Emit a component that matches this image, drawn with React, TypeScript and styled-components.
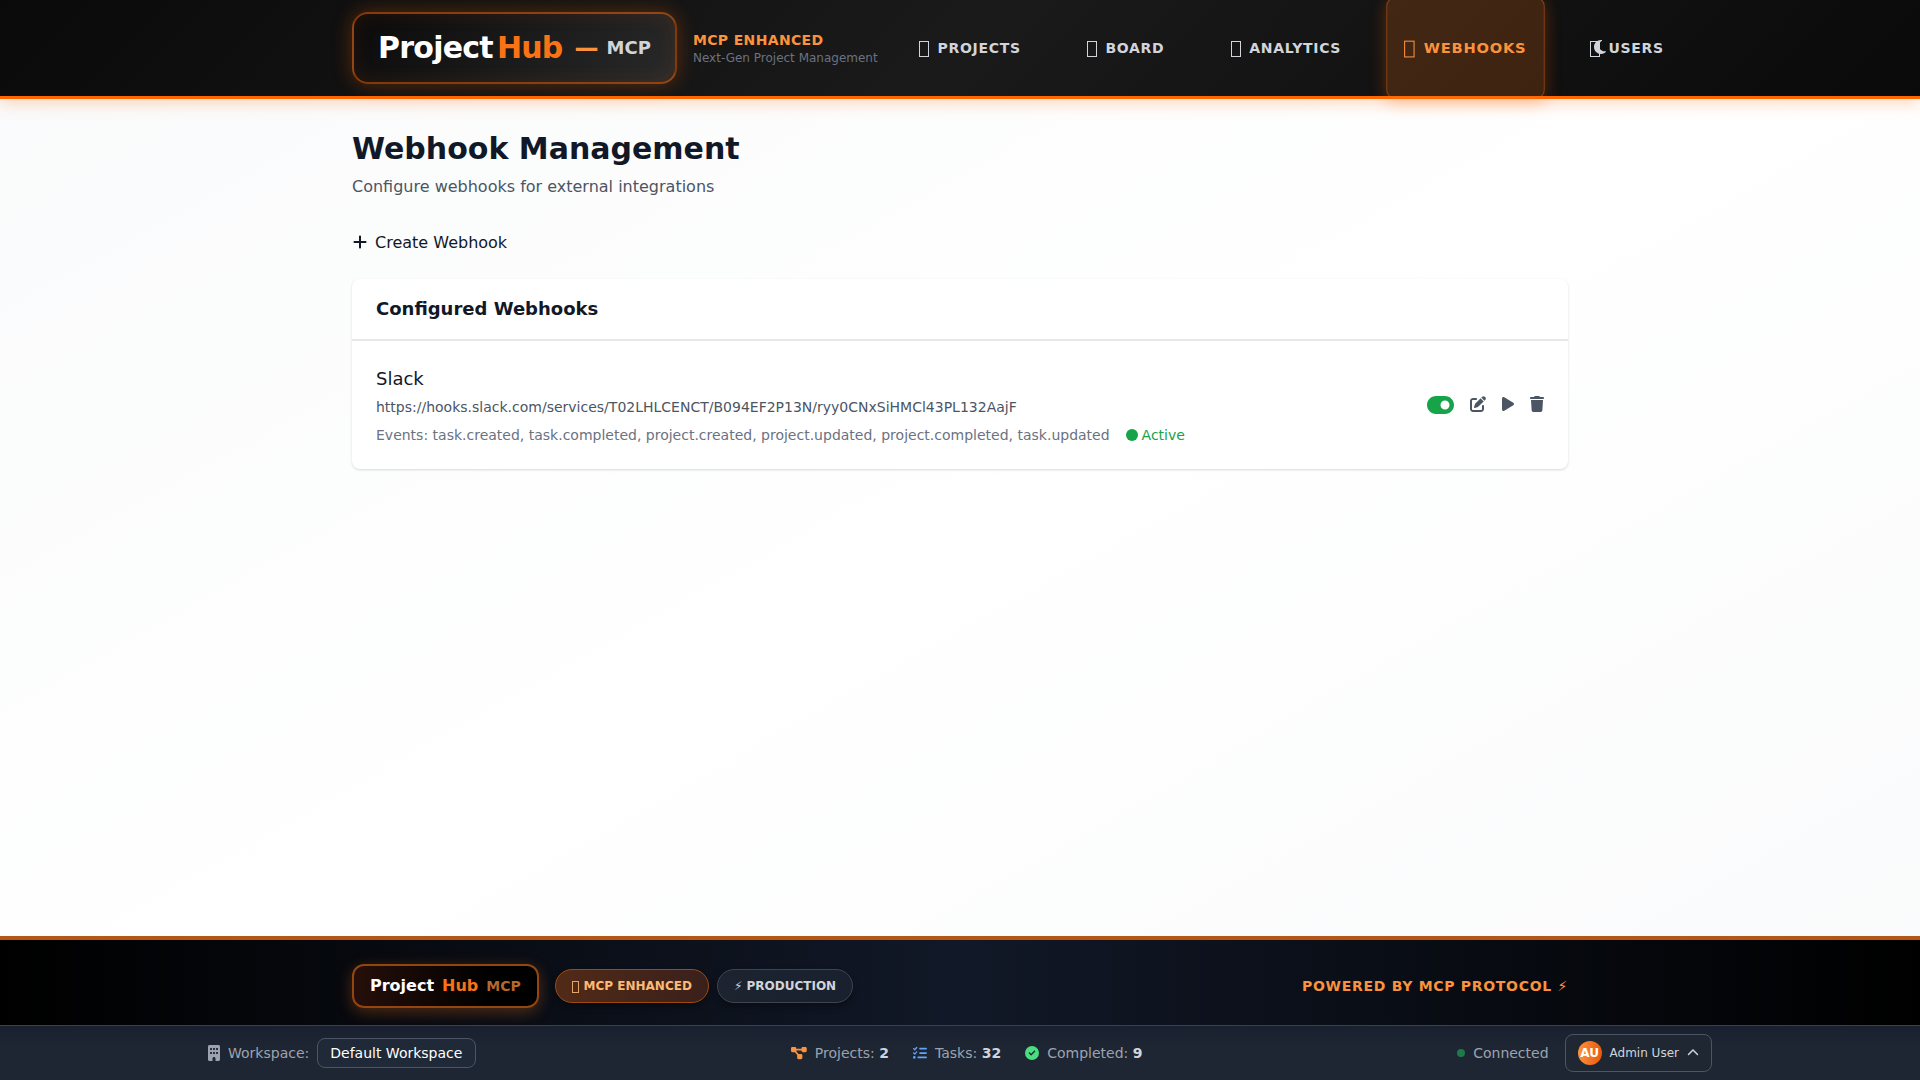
import React from "react";
import styled, { createGlobalStyle, css } from "styled-components";
import {
  FaBuilding,
  FaChevronUp,
  FaCircle,
  FaCircleCheck,
  FaDiagramProject,
  FaListCheck,
  FaMoon,
  FaPenToSquare,
  FaPlay,
  FaPlus,
  FaToggleOn,
  FaTrash,
} from "react-icons/fa6";

const GlobalStyle = createGlobalStyle`
  *, *::before, *::after { box-sizing: border-box; }
  body {
    margin: 0;
    font-family: "DejaVu Sans", sans-serif;
    font-size: 16px;
    line-height: 24px;
    color: #111827;
  }
  h1, h2, h3, p { margin: 0; }
  button { font: inherit; color: inherit; background: none; border: 0; padding: 0; }
  svg { display: block; flex-shrink: 0; height: 1em; }
  svg[viewBox="0 0 576 512"] { width: 1.125em; }
  svg[viewBox="0 0 448 512"] { width: 0.875em; }
  svg[viewBox="0 0 384 512"] { width: 0.75em; }
`;

const Page = styled.div`
  height: 100vh;
  display: flex;
  flex-direction: column;
  overflow: hidden;
  background: linear-gradient(to bottom right, #f9fafb 0%, #ffffff 50%, #f9fafb 100%);
`;

const Header = styled.header`
  position: relative;
  flex-shrink: 0;
  height: 99px;
  border-bottom: 3px solid #ff6600;
  background: linear-gradient(135deg, #0a0a0a 0%, #1a1a1a 50%, #0a0a0a 100%);
  box-shadow: 0 4px 15px rgba(255, 102, 0, 0.27);
`;

const Container = styled.div`
  width: 1216px;
  margin: 0 auto;
`;

const HeaderRow = styled(Container)`
  height: 96px;
  display: flex;
  align-items: center;
`;

const Logo = styled.div`
  display: flex;
  align-items: center;
  flex-shrink: 0;
  height: 72px;
  padding: 0 24px;
  border: 2px solid rgba(255, 102, 0, 0.5);
  border-radius: 16px;
  background: linear-gradient(135deg, #0a0a0a, #2a2a2a);
  box-shadow: 0 0 20px rgba(255, 102, 0, 0.3), inset 0 0 20px rgba(255, 102, 0, 0.1);
  font-weight: 700;
  white-space: nowrap;
`;

const LogoWord = styled.span<{ $accent?: boolean }>`
  font-size: 30px;
  line-height: 36px;
  letter-spacing: -0.75px;
  color: ${(p) => (p.$accent ? "#f97316" : "#ffffff")};
  margin-left: ${(p) => (p.$accent ? "4px" : "0")};
`;

const LogoDash = styled.span`
  margin: 0 8px 0 12px;
  font-size: 24px;
  line-height: 32px;
  color: #fb923c;
`;

const LogoSuffix = styled.span`
  font-size: 18px;
  line-height: 28px;
  color: #d1d5db;
`;

const Tagline = styled.div`
  display: flex;
  flex-direction: column;
  flex-shrink: 0;
  margin-left: 16px;
  white-space: nowrap;
`;

const TaglineTitle = styled.span`
  font-size: 14px;
  line-height: 20px;
  font-weight: 700;
  letter-spacing: 0.35px;
  color: #fb923c;
`;

const TaglineText = styled.span`
  font-size: 12px;
  line-height: 16px;
  color: #6b7280;
`;

const Nav = styled.nav`
  display: flex;
  gap: 32px;
  margin-left: 24px;
`;

const NavItem = styled.a<{ $active?: boolean }>`
  display: flex;
  align-items: center;
  flex-shrink: 0;
  height: 96px;
  padding: 0 16px;
  border: 1px solid transparent;
  border-radius: 8px;
  font-size: 14px;
  font-weight: 700;
  letter-spacing: 0.7px;
  white-space: nowrap;
  color: #d1d5db;
  ${(p) =>
    p.$active &&
    css`
      color: #fb923c;
      border-color: rgba(249, 115, 22, 0.4);
      background: rgba(249, 115, 22, 0.2);
      box-shadow: 0 4px 15px rgba(255, 102, 0, 0.3);
      transform: scale(1.05);
    `}
`;

const NavGlyph = styled.span`
  width: 10px;
  height: 16px;
  margin: 2px 8.6px 0 0.2px;
  border: 1px solid currentColor;
`;

const ThemeToggle = styled.button`
  position: absolute;
  left: 1594px;
  top: 39px;
  font-size: 16px;
  color: #d1d5db;
`;

const Main = styled.main`
  flex: 1;
  padding-top: 32px;
`;

const Title = styled.h1`
  font-size: 30px;
  line-height: 36px;
  font-weight: 700;
`;

const Subtitle = styled.p`
  margin-top: 8px;
  color: #4b5563;
`;

const CreateButton = styled.button`
  display: flex;
  align-items: center;
  gap: 8.5px;
  margin: 32px 0 24px;
  padding-left: 0.5px;
  svg { margin-bottom: 3px; }
`;

const Card = styled.section`
  border-radius: 8px;
  background: #ffffff;
  box-shadow: 0 1px 3px rgba(0, 0, 0, 0.1), 0 1px 2px rgba(0, 0, 0, 0.06);
`;

const CardHeader = styled.h2`
  padding: 16px 24px;
  border-bottom: 2px solid #e5e7eb;
  font-size: 18px;
  line-height: 28px;
  font-weight: 700;
`;

const WebhookRow = styled.div`
  display: flex;
  align-items: center;
  justify-content: space-between;
  padding: 24px;
`;

const WebhookName = styled.h3`
  font-size: 18px;
  line-height: 28px;
  font-weight: 400;
`;

const WebhookUrl = styled.p`
  margin-top: 4px;
  font-size: 14px;
  line-height: 20px;
  color: #4b5563;
`;

const WebhookMeta = styled.div`
  display: flex;
  align-items: center;
  gap: 16px;
  margin-top: 8px;
  font-size: 14px;
  line-height: 20px;
  color: #6b7280;
`;

const ActiveState = styled.span`
  display: flex;
  align-items: center;
  gap: 4px;
  color: #16a34a;
  svg { font-size: 12px; }
`;

const Actions = styled.div`
  display: flex;
  align-items: center;
  gap: 16px;
  color: #4b5563;
`;

const ActionButton = styled.button<{ $toggle?: boolean }>`
  font-size: ${(p) => (p.$toggle ? "24px" : "16px")};
  color: ${(p) => (p.$toggle ? "#16a34a" : "inherit")};
  padding-bottom: ${(p) => (p.$toggle ? "0" : "2px")};
`;

const Footer = styled.footer`
  flex-shrink: 0;
  height: 89px;
  border-top: 4px solid #b45614;
  background: linear-gradient(90deg, #000000, #111827, #000000);
`;

const FooterRow = styled(Container)`
  display: flex;
  align-items: center;
  padding-top: 24px;
`;

const FooterLogo = styled.div`
  display: flex;
  align-items: center;
  gap: 8px;
  height: 44px;
  margin-right: 16px;
  padding: 0 16px;
  border: 2px solid #94460f;
  border-radius: 12px;
  background: linear-gradient(90deg, #260f0a, #000000 75%);
  box-shadow: 0 4px 15px rgba(249, 115, 22, 0.3);
  font-weight: 700;
`;

const FooterWord = styled.span<{ $tone: "plain" | "accent" | "muted" }>`
  font-size: ${(p) => (p.$tone === "muted" ? "14px" : "16px")};
  color: ${(p) => ({ plain: "#ffffff", accent: "#f97316", muted: "#b4682c" })[p.$tone]};
`;

const Pill = styled.span<{ $accent?: boolean }>`
  display: flex;
  align-items: center;
  margin-right: 8px;
  padding: 8px 16px;
  border: 1px solid ${(p) => (p.$accent ? "#9c4a14" : "#3e4550")};
  border-radius: 999px;
  background: ${(p) =>
    p.$accent
      ? "linear-gradient(90deg, #522a17, #3a201b)"
      : "linear-gradient(90deg, #1d2430, #19202e)"};
  box-shadow: 0 4px 6px rgba(0, 0, 0, 0.3);
  font-size: 12px;
  line-height: 16px;
  font-weight: 700;
  color: ${(p) => (p.$accent ? "#fdba74" : "#d1d5db")};
`;

const PillGlyph = styled.span`
  width: 7px;
  height: 12px;
  margin: 1px 4.8px 0 0;
  border: 1px solid currentColor;
  opacity: 0.85;
`;

const Powered = styled.span`
  margin-left: auto;
  font-size: 14px;
  line-height: 20px;
  font-weight: 700;
  letter-spacing: 0.7px;
  color: #fb923c;
`;

const StatusBar = styled.div`
  flex-shrink: 0;
  height: 55px;
  border-top: 1px solid #374151;
  background: linear-gradient(180deg, #192130, #1f2633 50%);
  font-size: 14px;
  line-height: 20px;
  color: #9ca3af;
`;

const StatusInner = styled.div`
  width: 1504px;
  height: 54px;
  margin: 0 auto;
  display: flex;
  align-items: center;
  justify-content: space-between;
`;

const Group = styled.div<{ $gap?: number }>`
  display: flex;
  align-items: center;
  gap: ${(p) => p.$gap ?? 8}px;
`;

const WorkspaceSelect = styled.button`
  height: 30px;
  padding: 0 13px 0 12px;
  border: 1px solid #4b5563;
  border-radius: 8px;
  background: #1f2937;
  color: #ffffff;
`;

const StatIcon = styled.span<{ $color: string; $size?: number }>`
  font-size: ${(p) => p.$size ?? 14}px;
  color: ${(p) => p.$color};
`;

const StatValue = styled.strong`
  font-weight: 700;
  color: #d1d5db;
`;

const Dot = styled.span`
  width: 8px;
  height: 8px;
  border-radius: 50%;
  background: #1f7a4a;
`;

const UserButton = styled.button`
  display: flex;
  align-items: center;
  gap: 8px;
  height: 38px;
  padding: 0 12px;
  border: 1px solid #4b5563;
  border-radius: 8px;
  background: #1f2733;
  font-size: 12px;
  line-height: 16px;
  color: #d1d5db;
`;

const Avatar = styled.span`
  display: flex;
  align-items: center;
  justify-content: center;
  width: 24px;
  height: 24px;
  border-radius: 50%;
  background: linear-gradient(90deg, #fb923c, #ea580c);
  font-weight: 700;
  color: #ffffff;
`;

const navItems = [
  { label: "PROJECTS" },
  { label: "BOARD" },
  { label: "ANALYTICS" },
  { label: "WEBHOOKS", active: true },
  { label: "USERS" },
];

const stats = [
  { icon: <FaDiagramProject />, color: "#fb923c", label: "Projects:", value: 2 },
  { icon: <FaListCheck />, color: "#60a5fa", label: "Tasks:", value: 32 },
  { icon: <FaCircleCheck />, color: "#4ade80", label: "Completed:", value: 9 },
];

export default function App() {
  return (
    <Page>
      <GlobalStyle />
      <Header>
        <HeaderRow>
          <Logo>
            <LogoWord>Project</LogoWord>
            <LogoWord $accent>Hub</LogoWord>
            <LogoDash>—</LogoDash>
            <LogoSuffix>MCP</LogoSuffix>
          </Logo>
          <Tagline>
            <TaglineTitle>MCP ENHANCED</TaglineTitle>
            <TaglineText>Next-Gen Project Management</TaglineText>
          </Tagline>
          <Nav>
            {navItems.map((item) => (
              <NavItem key={item.label} $active={item.active}>
                <NavGlyph />
                {item.label}
              </NavItem>
            ))}
          </Nav>
        </HeaderRow>
        <ThemeToggle aria-label="Toggle theme">
          <FaMoon />
        </ThemeToggle>
      </Header>

      <Main>
        <Container>
          <Title>Webhook Management</Title>
          <Subtitle>Configure webhooks for external integrations</Subtitle>
          <CreateButton>
            <FaPlus />
            Create Webhook
          </CreateButton>
          <Card>
            <CardHeader>Configured Webhooks</CardHeader>
            <WebhookRow>
              <div>
                <WebhookName>Slack</WebhookName>
                <WebhookUrl>
                  https://hooks.slack.com/services/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
                </WebhookUrl>
                <WebhookMeta>
                  <span>
                    Events: task.created, task.completed, project.created, project.updated,
                    project.completed, task.updated
                  </span>
                  <ActiveState>
                    <FaCircle />
                    Active
                  </ActiveState>
                </WebhookMeta>
              </div>
              <Actions>
                <ActionButton $toggle aria-label="Disable"><FaToggleOn /></ActionButton>
                <ActionButton aria-label="Edit"><FaPenToSquare /></ActionButton>
                <ActionButton aria-label="Test"><FaPlay /></ActionButton>
                <ActionButton aria-label="Delete"><FaTrash /></ActionButton>
              </Actions>
            </WebhookRow>
          </Card>
        </Container>
      </Main>

      <Footer>
        <FooterRow>
          <FooterLogo>
            <FooterWord $tone="plain">Project</FooterWord>
            <FooterWord $tone="accent">Hub</FooterWord>
            <FooterWord $tone="muted">MCP</FooterWord>
          </FooterLogo>
          <Pill $accent>
            <PillGlyph />
            MCP ENHANCED
          </Pill>
          <Pill>⚡ PRODUCTION</Pill>
          <Powered>POWERED BY MCP PROTOCOL ⚡</Powered>
        </FooterRow>
      </Footer>

      <StatusBar>
        <StatusInner>
          <Group>
            <StatIcon $color="#9ca3af" $size={16}><FaBuilding /></StatIcon>
            <span>Workspace:</span>
            <WorkspaceSelect>Default Workspace</WorkspaceSelect>
          </Group>
          <Group $gap={24}>
            {stats.map((s) => (
              <Group key={s.label}>
                <StatIcon $color={s.color}>{s.icon}</StatIcon>
                <span>
                  {s.label} <StatValue>{s.value}</StatValue>
                </span>
              </Group>
            ))}
          </Group>
          <Group $gap={16}>
            <Group>
              <Dot />
              <span>Connected</span>
            </Group>
            <UserButton>
              <Avatar>AU</Avatar>
              Admin User
              <FaChevronUp />
            </UserButton>
          </Group>
        </StatusInner>
      </StatusBar>
    </Page>
  );
}
